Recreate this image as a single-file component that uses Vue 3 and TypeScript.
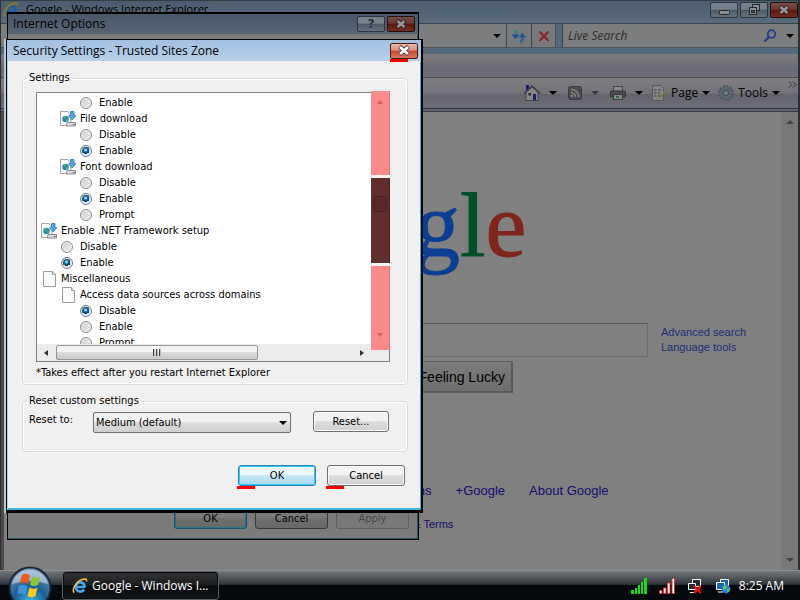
<script setup lang="ts">
import { ref } from 'vue'

interface Row {
  kind: 'radio' | 'download' | 'page'
  level: number
  label: string
  group?: string
}

const rows: Row[] = [
  { kind: 'radio', level: 2, label: 'Enable', group: 'prompting' },
  { kind: 'download', level: 1, label: 'File download' },
  { kind: 'radio', level: 2, label: 'Disable', group: 'file' },
  { kind: 'radio', level: 2, label: 'Enable', group: 'file' },
  { kind: 'download', level: 1, label: 'Font download' },
  { kind: 'radio', level: 2, label: 'Disable', group: 'font' },
  { kind: 'radio', level: 2, label: 'Enable', group: 'font' },
  { kind: 'radio', level: 2, label: 'Prompt', group: 'font' },
  { kind: 'download', level: 0, label: 'Enable .NET Framework setup' },
  { kind: 'radio', level: 1, label: 'Disable', group: 'net' },
  { kind: 'radio', level: 1, label: 'Enable', group: 'net' },
  { kind: 'page', level: 0, label: 'Miscellaneous' },
  { kind: 'page', level: 1, label: 'Access data sources across domains' },
  { kind: 'radio', level: 2, label: 'Disable', group: 'data' },
  { kind: 'radio', level: 2, label: 'Enable', group: 'data' },
  { kind: 'radio', level: 2, label: 'Prompt', group: 'data' },
]

const choices = ref<Record<string, string>>({
  prompting: 'Disable',
  file: 'Enable',
  font: 'Enable',
  net: 'Enable',
  data: 'Disable',
})

const level = ref('Medium (default)')
const address = ref('')
const liveSearch = ref('')
const query = ref('')
</script>

<template>
  <div class="desktop">
    <section class="browser">
      <header class="titlebar">
        <svg class="ie" viewBox="0 0 16 16" width="16" height="16">
          <path d="M13 9H4.800M12.800 9.200A4.600 4.600 0 1 0 12 11.600" fill="none" stroke="#1c5f9c" stroke-width="2.400" />
          <path d="M2.200 14.600C-.6 12 4 4 9 2c4-1.800 6-1 5.400 1.400" fill="none" stroke="#9a7c22" stroke-width="1.500" />
        </svg>
        <span class="caption">Google - Windows Internet Explorer</span>
        <div class="winbtns">
          <button type="button" aria-label="Minimize">
            <svg viewBox="0 0 26 14" width="26" height="14"><rect x="8.500" y="7.500" width="10" height="4" rx="1" fill="#8a8f95" stroke="#25292e" /></svg>
          </button>
          <button type="button" aria-label="Restore">
            <svg viewBox="0 0 26 14" width="26" height="14" fill="#8a8f95" stroke="#25292e"><rect x="11.500" y="1.500" width="7" height="6" /><rect x="8.500" y="4.500" width="7" height="7" /><rect x="10.500" y="7.500" width="3" height="2" fill="#4c5866" /></svg>
          </button>
          <button type="button" class="red dim" aria-label="Close">
            <svg viewBox="0 0 26 14" width="26" height="14"><path d="M9 3.500l8 7M17 3.500l-8 7" stroke="#3a1a18" stroke-width="4" /><path d="M9.500 4l7 6M16.500 4l-7 6" stroke="#9a9a9a" stroke-width="2.400" /></svg>
          </button>
        </div>
      </header>

      <div class="nav">
        <label class="field grow">
          <input v-model="address" type="text" aria-label="Address" />
          <i class="tri"></i>
        </label>
        <button type="button" class="navbtn" aria-label="Refresh">
          <svg viewBox="0 0 16 16" width="16" height="16" fill="none" stroke-width="2.400">
            <path d="M4.500 8V5.500Q4.500 3 7 2.500" stroke="#2f8488" /><path d="M.5 6.500h8L4.500 11z" fill="#1f5490" stroke="none" />
            <path d="M11.500 8v3Q11.500 13.500 9 14" stroke="#2f62a0" /><path d="M7.500 9.500h8l-4-4.500z" fill="#1f5490" stroke="none" />
          </svg>
        </button>
        <button type="button" class="navbtn last" aria-label="Stop">
          <svg viewBox="0 0 16 16" width="16" height="16"><path d="M3.500 3.500l9 9.500M12.500 3.500l-9 9.500" stroke="#8a2626" stroke-width="2.200" /></svg>
        </button>
        <label class="field live">
          <input v-model="liveSearch" type="text" placeholder="Live Search" aria-label="Live Search" />
          <svg viewBox="0 0 14 14" width="14" height="14" fill="none"><circle cx="8.500" cy="5" r="3.800" stroke="#1f3f80" stroke-width="1.800" /><path d="M5.800 8L1.500 12.500" stroke="#1f3f80" stroke-width="2.400" /></svg>
          <i class="tri"></i>
        </label>
      </div>

      <div class="menustrip"></div>

      <div class="toolbar">
        <button type="button" class="tool icononly" aria-label="Home">
          <svg viewBox="0 0 18 18" width="18" height="18"><path d="M3 8v8.500h12V8L9 3z" fill="#85858a" stroke="#44454c" /><path d="M1 9.500L9 2l8 7.500" fill="none" stroke="#3b3c4c" stroke-width="1.400" /><path d="M3 6.500V1h3v3z" fill="#1a1a6e" /><rect x="10" y="10" width="3" height="6" fill="#16206a" /><rect x="5.500" y="9" width="2.500" height="2.500" fill="#222" /></svg>
          <i class="tri"></i>
        </button>
        <button type="button" class="tool icononly" aria-label="Feeds">
          <svg viewBox="0 0 16 16" width="16" height="16"><rect x="1.500" y="1.500" width="13" height="13" rx="2" fill="#4b4b4d" stroke="#3a3a3c" /><g fill="none" stroke="#848486" stroke-width="1.600"><path d="M4 4.200A7.800 7.800 0 0 1 11.800 12M4 7.500A4.500 4.500 0 0 1 8.500 12" /></g><circle cx="5" cy="11" r="1.300" fill="#848486" /></svg>
          <i class="tri soft"></i>
        </button>
        <button type="button" class="tool" aria-label="Print">
          <svg viewBox="0 0 18 16" width="18" height="16"><rect x="4.500" y="1.500" width="9" height="5" fill="#88888a" stroke="#444" /><rect x="1.500" y="6" width="15" height="6" rx="1" fill="#4a4b4e" stroke="#343436" /><rect x="4.500" y="9.500" width="9" height="5" fill="#888" stroke="#3a3a3a" /><path d="M7 11h3v2H7z" fill="#2f6a4c" /></svg>
          <i class="tri"></i>
        </button>
        <button type="button" class="tool">
          <svg viewBox="0 0 16 16" width="16" height="16"><path d="M1.500.5h8l3 3v12h-11z" fill="#858587" stroke="#55565c" /><path d="M3.500 5h2M3.500 8h2M3.500 11h2M7 5h3M7 8h2M7 11h3" stroke="#3b3c42" /><path d="M15 6l-5 7-2 .8.500-2L13.500 5z" fill="#857a3c" /></svg>
          <span>Page</span><i class="tri"></i>
        </button>
        <button type="button" class="tool">
          <svg viewBox="0 0 16 16" width="16" height="16" fill="none"><circle cx="8" cy="8" r="6.800" stroke="#47525a" stroke-width="2" stroke-dasharray="2.300 1.260" /><circle cx="8" cy="8" r="4.800" stroke="#56656f" stroke-width="3" /><circle cx="8" cy="8" r="2.600" fill="#7c7c80" stroke="#3e4950" /></svg>
          <span>Tools</span><i class="tri"></i>
        </button>
        <svg class="more" viewBox="0 0 9 7" width="9" height="7"><path d="M1 .5l3 3-3 3M5 .5l3 3-3 3" fill="none" stroke="#2e2e34" /></svg>
      </div>
      <div class="strip"></div>

      <div class="viewport">
        <main class="page">
          <h1 class="logo"><span class="b">G</span><span class="r">o</span><span class="y">o</span><span class="b">g</span><span class="g">l</span><span class="r">e</span></h1>
          <div class="searchrow">
            <input v-model="query" class="query" type="text" aria-label="Search" />
            <nav class="sidelinks"><a href="#">Advanced search</a><a href="#">Language tools</a></nav>
          </div>
          <div class="gobuttons">
            <button type="button">Google Search</button>
            <button type="button">I'm Feeling Lucky</button>
          </div>
          <nav class="foot">
            <a href="#">Advertising Programs</a><a href="#">Business Solutions</a><a href="#">+Google</a><a href="#">About Google</a>
          </nav>
          <p class="legal">© 2012 - <a href="#">Privacy &amp; Terms</a></p>
        </main>
        <div class="pagescroll"><i class="up"></i><i class="down"></i></div>
      </div>
    </section>

    <section class="dialog options">
      <header class="dtitle">
        <span>Internet Options</span>
        <button type="button" class="help" aria-label="Help">?</button>
        <button type="button" class="red dim" aria-label="Close">
          <svg viewBox="0 0 26 14" width="26" height="14"><path d="M9 3.500l8 7M17 3.500l-8 7" stroke="#3a1a18" stroke-width="4" /><path d="M9.500 4l7 6M16.500 4l-7 6" stroke="#9a9a9a" stroke-width="2.400" /></svg>
        </button>
      </header>
      <footer class="actions">
        <button type="button" class="push primary">OK</button>
        <button type="button" class="push">Cancel</button>
        <button type="button" class="push" disabled>Apply</button>
      </footer>
    </section>

    <section class="dialog security" role="dialog" aria-label="Security Settings">
      <header class="dtitle">
        <span>Security Settings - Trusted Sites Zone</span>
        <button type="button" class="red marked" aria-label="Close">
          <svg viewBox="0 0 26 14" width="26" height="14"><path d="M8.500 2.500l9 8M17.500 2.500l-9 8" stroke="#5c3a4a" stroke-width="4.400" /><path d="M9 3l8 7M17 3l-8 7" stroke="#fff" stroke-width="2.800" /></svg>
        </button>
      </header>
      <div class="dbody">
        <fieldset class="settings">
          <legend>Settings</legend>
          <div class="listbox">
            <ul class="rows">
              <li v-for="(row, i) in rows" :key="i" :class="'level-' + row.level">
                <label v-if="row.kind === 'radio'">
                  <span class="slot"><input v-model="choices[row.group!]" type="radio" :name="row.group" :value="row.label" /></span>
                  <span>{{ row.label }}</span>
                </label>
                <template v-else>
                  <svg v-if="row.kind === 'download'" class="slot" viewBox="0 0 16 16" width="16" height="16">
                    <path d="M.5.500h7.500l3 3v11H.5z" fill="#fafafa" stroke="#a2a6aa" />
                    <circle cx="5.500" cy="8" r="3.300" fill="#2f82c8" /><path d="M4 5.500l2.500-.5L5 7.500 3 8zM6 8l2.500-.5-1 3-1.500.3z" fill="#4cb848" />
                    <path d="M10.500.5h3.500v4h2L12.200 9 8.500 4.500h2z" fill="#4ea6e0" stroke="#2c78b8" stroke-width=".8" />
                    <path d="M7.500 11.500h8v3.500h-9v-2z" fill="#d8dadc" stroke="#7c8084" stroke-width=".9" /><path d="M13 13.500h1.500" stroke="#555" />
                  </svg>
                  <svg v-else class="slot" viewBox="0 0 16 16" width="16" height="16">
                    <path d="M2.500.5h9l3 3v12h-12z" fill="#fbfbfb" stroke="#9c9c9c" /><path d="M11.500.5v3h3" fill="#e4e4e4" stroke="#9c9c9c" />
                  </svg>
                  <span>{{ row.label }}</span>
                </template>
              </li>
            </ul>
            <div class="hscroll"><i class="left"></i><div class="thumb"><b></b><b></b><b></b></div><i class="right"></i></div>
            <div class="vscroll">
              <div class="zone"><i class="up"></i></div>
              <div class="zone dark"><i class="grip"></i></div>
              <div class="zone end"><i class="down"></i></div>
            </div>
          </div>
          <p class="note">*Takes effect after you restart Internet Explorer</p>
        </fieldset>

        <fieldset class="reset">
          <legend>Reset custom settings</legend>
          <div class="resetrow">
            <label for="reset-level">Reset to:</label>
            <span class="combo">
              <select id="reset-level" v-model="level">
                <option>Low</option>
                <option>Medium (default)</option>
                <option>High</option>
              </select>
              <i class="tri"></i>
            </span>
            <button type="button" class="push">Reset...</button>
          </div>
        </fieldset>

        <footer class="actions">
          <button type="button" class="push primary marked">OK</button>
          <button type="button" class="push marked">Cancel</button>
        </footer>
      </div>
    </section>

    <footer class="taskbar">
      <button type="button" class="start" aria-label="Start">
        <svg viewBox="0 0 44 44" width="44" height="44">
          <defs>
            <radialGradient id="orb" cx=".5" cy=".85" r=".8"><stop offset="0" stop-color="#38c0e8" /><stop offset=".5" stop-color="#1a5c94" /><stop offset="1" stop-color="#7c98b0" /></radialGradient>
          </defs>
          <circle cx="22" cy="22" r="20.500" fill="url(#orb)" stroke="#1a2a38" stroke-width="2" />
          <path d="M4 18A18.500 18.500 0 0 1 40 18Q22 12 4 18z" fill="#dcebf5" opacity=".55" />
          <path d="M14 9q4-2.500 8 .5l-2 8.500q-4-2.500-8.500-.5z" fill="#ea5a1e" />
          <path d="M24 10.500q4 2.500 8.500 0L30 19q-4 2-8 0z" fill="#8cc63a" />
          <path d="M11 20q4-2 8.500.5L17.500 29q-4-2.500-8.500-.5z" fill="#3f94dc" />
          <path d="M21.500 21.500q4 2.500 8 0l-2 8.500q-4 2.500-8 .3z" fill="#fcc81e" />
        </svg>
      </button>
      <button type="button" class="task">
        <svg viewBox="0 0 16 16" width="16" height="16">
          <path d="M13 9H4.800M12.800 9.200A4.600 4.600 0 1 0 12 11.600" fill="none" stroke="#3fa9f0" stroke-width="2.600" />
          <path d="M2.200 14.600C-.6 12 4 4 9 2c4-1.800 6-1 5.400 1.400" fill="none" stroke="#f5c136" stroke-width="1.600" />
        </svg>
        <span>Google - Windows I...</span>
      </button>
      <div class="tray">
        <svg viewBox="0 0 16 16" width="16" height="16" fill="#10e010"><path d="M0 12h3v4H0zM4 10h2v6H4zM7 7h2v9H7zM10 4h2v12h-2zM13 0h3v16h-3z" /></svg>
        <svg viewBox="0 0 16 16" width="16" height="16" fill="#fff" stroke="#e03030" stroke-width=".9"><path d="M.5 12.500H3v3H.5zM4.500 10H7v5.500H4.500zM8.500 5H11v10.500H8.500zM13 .5h2.500v15H13z" /></svg>
        <svg viewBox="0 0 16 16" width="16" height="16"><path d="M5.500 1.500h8v7h-8z" fill="#222a30" stroke="#fff" /><path d="M1.500 5.500h7v6h-7zM3 14.500h5" fill="#222a30" stroke="#fff" /><path d="M7 8l7 7M14 8l-7 7" stroke="#f01010" stroke-width="2.400" /></svg>
        <svg viewBox="0 0 16 16" width="16" height="16"><path d="M5.500 1.500h8v7h-8z" fill="#1c62b4" stroke="#fff" /><path d="M1.500 4.500h8v7h-8zM3 14h5" fill="#1c62b4" stroke="#fff" /><circle cx="11" cy="11" r="4.400" fill="#2b7be0" /><path d="M8 8.500l3-1.500 1 2-2 2.500-2-.5zM12 11l3-1-1 3.500-2 1z" fill="#5ccc50" /></svg>
        <time>8:25 AM</time>
      </div>
    </footer>
  </div>
</template>

<style>
body {
  margin: 0;
  background: #808080;
}
</style>

<style scoped>
.desktop {
  --ui: 'Open Sans', 'Noto Sans', sans-serif;
  --dlg: 'DejaVu Sans Condensed', 'DejaVu Sans', sans-serif;
  position: relative;
  display: flex;
  flex-direction: column;
  min-height: 100vh;
  overflow: hidden;
  font: 11px/16px var(--ui);
  color: #000;
}
.desktop * { box-sizing: border-box; }
button, input, select { font: inherit; color: inherit; margin: 0; padding: 0; }
input { min-width: 0; }
svg { display: block; flex: none; }
a { text-decoration: none; }

.tri, .up, .down, .left, .right { width: 0; height: 0; border: 4px solid transparent; flex: none; }
.tri { border-top-color: #000; border-bottom: 0; }
.tri.soft { border-top-color: #3c3c40; }

.browser {
  flex: 1;
  display: flex;
  flex-direction: column;
  border: 0 solid #2d3033;
  border-width: 0 2px 0 1px;
  background: #56697c;
}
.titlebar {
  display: flex;
  align-items: flex-start;
  gap: 7px;
  height: 24px;
  padding: 1px 0 0 2px;
  border-top: 1px solid #2f3f44;
  background: linear-gradient(#4c5c6c, #5a6b7c);
  border-bottom: 1px solid #3a434c;
}
.caption { flex: 1; line-height: 14px; }
.winbtns { display: flex; gap: 2px; }
.winbtns button, .dtitle button {
  width: 28px;
  height: 16px;
  border: 1px solid #2c343c;
  border-radius: 2px;
  background: linear-gradient(#74808c 45%, #4c5864 50%, #66727e);
}
button.red {
  border-color: #471a16;
  background: linear-gradient(#e8b4a4, #dc8070 45%, #c03c24 50%, #d86a48);
}
.winbtns button.red.dim, .dtitle button.red.dim {
  border-color: #240c0a;
  background: linear-gradient(#74504a, #6a3832 45%, #5c1810 50%, #6e3022);
}
.dtitle button.red.marked {
  border-color: #471a16;
  background: linear-gradient(#ecbcae, #dc8a7a 45%, #c44a34 50%, #dc7a58);
}
.nav { display: flex; height: 24px; border-bottom: 1px solid #4a5560; }
.field { display: flex; align-items: center; background: #7c7d7e; padding-right: 5px; }
.field input { flex: 1; border: 0; background: none; outline: 0; font-size: 12px; }
.grow { flex: 1; }
.live { width: 236px; margin-left: 6px; border-left: 1px solid #3c444c; }
.live { gap: 9px; padding-right: 4px; padding-left: 5px; }
.live input { font-style: italic; }
.live input::placeholder { color: #2c2c2c; opacity: 1; }
.navbtn {
  display: grid;
  place-items: center;
  width: 25px;
  border: 0;
  border-left: 1px solid #3c444c;
  background: #78797c;
}
.navbtn.last { border-right: 1px solid #4a525a; }
.menustrip { height: 23px; margin-top: 6px; background: linear-gradient(#7d7d80, #696973 70%, #71717b); }
.toolbar {
  display: flex;
  align-items: center;
  justify-content: flex-end;
  gap: 8px;
  height: 31px;
  padding-right: 1px;
  border-top: 1px solid #4c4d54;
  background: linear-gradient(#7e7e80, #73737a 50%, #656570 55%, #6d6d78);
}
.tool {
  display: flex;
  align-items: center;
  gap: 4px;
  border: 0;
  background: none;
  font-size: 12px;
}
.icononly { margin-right: 2px; }
.tool svg + .tri { margin-left: 4px; }
.more { align-self: flex-start; margin-top: 3px; }
.strip { height: 4px; background: #62647a; border-top: 1px solid #34353c; border-bottom: 1px solid #3c3d42; }

.viewport { flex: 1; display: flex; background: #808080; border-left: 3px solid #4a4a4a; }
.page { flex: 1; min-width: 0; margin-left: -4px; font-family: 'Liberation Sans', Arial, sans-serif; }
.page a { color: #130a6e; }
.logo {
  margin: 61px 0 0;
  text-align: center;
  font: 92px/104px 'Liberation Serif', 'Times New Roman', serif;
  -webkit-text-stroke: 1px currentColor;
}
.b { color: #0c3f92; }
.r { color: #7e261c; }
.y { color: #857000; }
.g { color: #00502a; }
.searchrow { display: grid; grid-template-columns: 1fr 514px 1fr; align-items: center; margin-top: 46px; }
.query { grid-column: 2; height: 34px; border: 1px solid #6c6c6c; border-top-color: #555; background: #808080; }
.sidelinks { display: flex; flex-direction: column; padding-left: 13px; line-height: 15px; white-space: nowrap; }
.page .sidelinks a { color: #1c2f78; }
.gobuttons { display: flex; justify-content: center; gap: 12px; margin-top: 4px; }
.gobuttons button {
  height: 32px;
  padding: 0 6px;
  border: 1px solid #5a5a5a;
  border-width: 1px 2px 2px 1px;
  background: linear-gradient(#7c7c7c, #6e6e6e);
  font: 14px/20px 'Liberation Sans', Arial, sans-serif;
}
.foot { display: flex; justify-content: center; gap: 24px; margin-top: 90px; font-size: 13px; line-height: 16px; }
.legal { margin: 17px 0 0; text-align: center; color: #222; }
.pagescroll {
  display: flex;
  flex-direction: column;
  justify-content: space-between;
  align-items: center;
  width: 16px;
  padding: 8px 0;
  background: #787878;
}
.up { border-top: 0; border-bottom-color: #444; }
.down { border-bottom: 0; border-top-color: #444; }
.left { border-left: 0; border-right-color: #333; }
.right { border-right: 0; border-left-color: #333; }

.dialog { position: absolute; display: flex; flex-direction: column; }
.dtitle { display: flex; align-items: center; gap: 2px; height: 21px; padding: 0 3px 0 5px; font-size: 12px; }
.dtitle span { flex: 1; }
.options {
  left: 7px;
  top: 12px;
  width: 412px;
  height: 528px;
  justify-content: space-between;
  border: 1px solid #000;
  border-top-width: 2px;
  box-shadow: inset -1px -1px #1a5560;
  background: #7b7b7b;
}
.options .dtitle { height: 20px; background: linear-gradient(#4a5766, #566473); }
.options .help { color: #25292e; font-weight: 700; line-height: 12px; }
.actions { display: flex; justify-content: flex-end; }
.options .actions { gap: 8px; padding: 0 9px 10px; font: 11px/16px var(--dlg); }
.options .push { width: 73px; background: linear-gradient(#7a7a7a 45%, #707070 50%, #686868); border-color: #383838; box-shadow: none; }
.options .push.primary { border-color: #1c5068; box-shadow: inset 0 0 0 1px #24788c; }
.options .push:disabled { color: #484848; border-color: #606060; background: #787878; }

.security {
  left: 6px;
  top: 39px;
  width: 417px;
  border: 1px solid #000;
  border-width: 1px 2px 3px 1px;
  background: #f0f0f0;
  box-shadow: -2px 0 #c4cad4, inset 1px 0 #a8d4ec, inset -1px -2px #3cb4dc;
}
.security .dtitle { padding-left: 6px; background: linear-gradient(#a4c0e0, #b6d0ea); }
.dbody { padding: 9px 13px 24px 15px; font: 11px/16px var(--dlg); }
fieldset { min-width: 0; margin: 0; border: 1px solid #d6dbe0; border-radius: 4px; box-shadow: inset 0 0 0 1px #fff; }
legend { padding: 0 2px; margin: 0; }
.settings { padding: 6px 17px 3px 13px; }
.settings legend { margin-left: -9px; }
.listbox { position: relative; border: 1px solid #7c7f84; background: #fff; }
.rows { height: 251px; margin: 0; padding: 2px 0 0; overflow: hidden; list-style: none; }
.rows li, .rows label { display: flex; align-items: center; gap: 4px; height: 16px; white-space: nowrap; }
.level-0 { padding-left: 4px; }
.level-1 { padding-left: 23px; }
.level-2 { padding-left: 42px; }
.slot { display: grid; place-items: center start; width: 16px; height: 16px; flex: none; }
.slot input { margin-left: 1px; }
input[type='radio'] {
  appearance: none;
  width: 12px;
  height: 12px;
  border: 1px solid #8a8c90;
  border-radius: 50%;
  background: linear-gradient(135deg, #c4c8cc, #f4f4f4);
  box-shadow: inset 0 0 0 1px #f2f2f2;
}
input[type='radio']:checked {
  border-color: #6c7c8c;
  background: radial-gradient(circle at 45% 40%, #7cd4f4 0 1px, #1c6494 2px, #10344c 4px, #dce4ea 4px);
}
.hscroll { display: flex; align-items: center; height: 17px; padding: 0 25px 0 7px; background: #ececec; }
.hscroll .left, .hscroll .right { border-width: 3px 4px; }
.hscroll .left { border-left: 0; }
.hscroll .right { border-right: 0; }
.thumb {
  display: flex;
  align-items: center;
  justify-content: center;
  gap: 1px;
  width: 202px;
  height: 15px;
  margin: 0 auto 0 8px;
  border: 1px solid #959595;
  border-radius: 2px;
  background: linear-gradient(#f4f4f4 45%, #dcdcdc 50%, #cacaca);
}
.thumb b { width: 2px; height: 7px; border-left: 1px solid #444; background: #bbb; }
.vscroll {
  position: absolute;
  top: -2px;
  right: -1px;
  bottom: 11px;
  width: 19px;
  display: grid;
  grid-template-rows: repeat(3, 1fr);
  gap: 3px;
  background: #f4f4f4;
}
.zone { display: flex; flex-direction: column; align-items: center; padding: 9px 0; background: #fb8a8a; border-right: 1px solid #d07478; }
.zone.dark { background: #612e2e; border-color: #4a2224; padding: 18px 0; }
.zone.end { justify-content: flex-end; padding-bottom: 13px; }
.zone .up { border-bottom-color: #d85c60; }
.zone .down { border-top-color: #d85c60; }
.zone .up, .zone .down { border-left-width: 3px; border-right-width: 3px; }
.grip { width: 14px; height: 16px; border: 1px solid #4c2020; background: #5a2828; }
.note { margin: 3px 0 0; }
.reset { margin-top: 8px; padding: 2px 18px 18px 6px; }
.reset legend { margin-left: -2px; }
.resetrow { display: flex; align-items: flex-start; }
.resetrow label { width: 64px; line-height: 18px; }
.combo { position: relative; width: 198px; margin: 1px auto 0 0; }
.combo select {
  appearance: none;
  display: block;
  width: 100%;
  height: 21px;
  padding: 0 18px 0 2px;
  border: 1px solid #707070;
  border-radius: 2px;
  background: linear-gradient(#f2f2f2 45%, #dedede 50%, #cfcfcf);
}
.combo .tri { position: absolute; right: 4px; top: 9px; }
.push {
  height: 21px;
  width: 78px;
  border: 1px solid #707070;
  border-radius: 3px;
  background: linear-gradient(#f3f3f3 45%, #dfdfdf 50%, #d0d0d0);
  box-shadow: inset 0 0 0 1px #fafafa;
}
.resetrow .push { width: 76px; }
.primary { border-color: #2c86b4; background: linear-gradient(#eef8fd 45%, #c8e8f8 50%, #a8dcf4); box-shadow: inset 0 0 0 1px #30c8f4; }
.dbody > .actions { gap: 11px; padding-right: 3px; margin-top: 13px; }
.marked { position: relative; }
.marked::after { content: ''; position: absolute; left: -2px; top: 20px; width: 18px; height: 3px; background: #f80000; }
.dtitle .marked::after { left: -1px; top: 15px; }

.taskbar {
  position: relative;
  display: flex;
  align-items: center;
  height: 30px;
  padding: 0 16px 0 8px;
  border-top: 1px solid #8c9094;
  background: linear-gradient(#74787c, #2f3439 46%, #03080c 50%, #060a0e);
  color: #fff;
  font-size: 12px;
}
.start { width: 44px; height: 30px; border: 0; background: none; display: flex; align-items: flex-start; }
.start svg { margin-top: -5px; }
.task {
  display: flex;
  align-items: center;
  gap: 4px;
  width: 155px;
  height: 27px;
  margin-left: 11px;
  padding: 0 8px;
  border: 1px solid #08090a;
  border-radius: 3px;
  box-shadow: 0 0 0 1px #5c6064;
  background: linear-gradient(#303234, #1c1d1f 48%, #08090a 52%, #141516);
  white-space: nowrap;
}
.tray { display: flex; align-items: center; gap: 12px; margin-left: auto; }
.tray time { margin-left: -4px; }
</style>
